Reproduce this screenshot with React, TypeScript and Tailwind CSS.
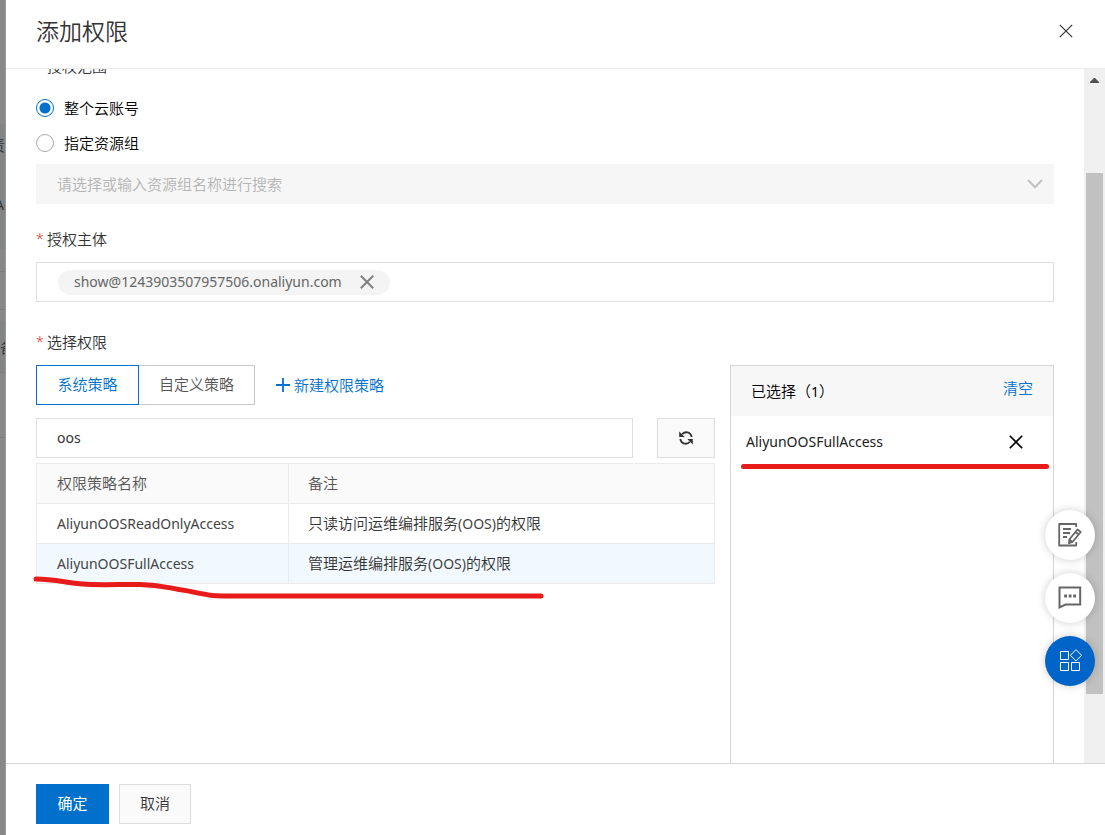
import React, { useState } from "react";

const policies = [
  { name: "AliyunOOSReadOnlyAccess", service: "只读访问运维编排服务" },
  { name: "AliyunOOSFullAccess", service: "管理运维编排服务" },
];

const radioClass =
  "appearance-none w-[18px] h-[18px] shrink-0 rounded-full border border-[#aaa] bg-white checked:border-[#0070cc] checked:bg-[radial-gradient(circle,#0070cc_5px,#fff_6px)]";

function CloseIcon({ size, width = 1 }: { size: number; width?: number }) {
  return (
    <svg width={size} height={size} viewBox="0 0 14 14" fill="none" stroke="currentColor" strokeWidth={width}>
      <path d="M.8 .8 13.2 13.2M13.2 .8 .8 13.2" />
    </svg>
  );
}

function RequiredLabel({ children, htmlFor }: { children: React.ReactNode; htmlFor: string }) {
  return (
    <label htmlFor={htmlFor} className="flex w-fit gap-1 text-[#333]">
      <span className="w-[7px] text-sm leading-5 text-[#d93026]">*</span>
      {children}
    </label>
  );
}

function Scrollbar() {
  return (
    <div className="flex w-[21px] shrink-0 flex-col items-center bg-[#f0f0f0]">
      <svg className="mt-[9px] shrink-0" width="9" height="5" viewBox="0 0 9 5" fill="#505050">
        <path d="M0 5V4L4 0H5L9 4V5Z" />
      </svg>
      <div className="mt-[90px] h-[75%] w-[17px] bg-[#c1c1c1]" />
    </div>
  );
}

function FloatingTools() {
  return (
    <div className="absolute right-[10px] top-[510px] flex flex-col gap-[13px] text-[#666]">
      <button type="button" aria-label="反馈" className="flex h-[50px] w-[50px] items-center justify-center rounded-full bg-white shadow-[0_0_8px_rgba(0,0,0,0.2)]">
        <svg width="24" height="24" viewBox="0 0 24 24" fill="none" stroke="currentColor" strokeWidth="1.8">
          <path d="M18.2 4V1H1.2V22.5H18.2V19" strokeLinejoin="round" />
          <path d="M5 6H13M5 10H12M5 14H9" />
          <path d="M19.5 6.5 22.7 9 14.5 19 11 20.2 11.3 16.5ZM17.5 9 20.7 11.5M11.3 16.5 14.5 19" strokeLinejoin="round" />
        </svg>
      </button>
      <button type="button" aria-label="咨询" className="flex h-[50px] w-[50px] items-center justify-center rounded-full bg-white shadow-[0_0_8px_rgba(0,0,0,0.2)]">
        <svg width="24" height="24" viewBox="0 0 24 24" fill="none" stroke="currentColor" strokeWidth="2">
          <path d="M1.5 1.5H22.2V18.5H7.5L1.5 21.5Z" />
          <path d="M6.2 10H9M10.7 10H13.5M15.2 10H18" strokeWidth="3" />
        </svg>
      </button>
      <button type="button" aria-label="应用" className="flex h-[50px] w-[50px] items-center justify-center rounded-full bg-[#0064c8] text-white shadow-[0_0_8px_rgba(0,0,0,0.2)]">
        <svg width="24" height="24" viewBox="0 0 24 24" fill="none" stroke="currentColor">
          <path d="M2.5 2.5H10.5V10.5H2.5ZM2.5 13.5H10.5V21.5H2.5ZM13.5 13.5H21.5V21.5H13.5Z" />
          <path d="M18 .7 23.6 6.3 18 11.9 12.4 6.3Z" />
        </svg>
      </button>
    </div>
  );
}

export default function App() {
  const [scope, setScope] = useState("account");
  const [keyword, setKeyword] = useState("oos");

  return (
    <div className="relative flex h-screen overflow-hidden bg-white font-['Noto_Sans','Noto_Sans_CJK_SC',sans-serif] font-[350] text-[15px] leading-5 text-[#333]">
      {/* strip of the dimmed page behind the drawer */}
      <div className="flex w-[6px] shrink-0 flex-col overflow-hidden border-r border-[#999] bg-[#888] text-[#333]">
        <div className="mt-[124px] flex h-[125px] shrink-0 flex-col bg-[#828486]">
          <span className="-ml-[10px] mt-[11px]">责</span>
          <span className="-ml-[5px] mt-10 text-sm font-normal">Ac</span>
        </div>
        <div className="mt-[22px] h-[39px] shrink-0 border-y border-[#7c7c7c]" />
        <div className="mt-[11px] h-[52px] shrink-0 border-b border-[#7c7c7c] bg-[#828486] pt-4">
          <span className="block w-[15px]">备</span>
        </div>
        <div className="h-[65px] shrink-0 border-b border-[#7c7c7c]" />
      </div>

      <div className="flex min-w-0 flex-1 flex-col">
        <header className="flex h-[69px] shrink-0 items-center justify-between border-b border-[#ebebeb] pb-1.5 pl-[30px] pr-8">
          <h1 className="font-[350] text-[23px] leading-8 text-[#333]">添加权限</h1>
          <button type="button" aria-label="关闭" className="text-[#333]">
            <CloseIcon size={14} width={1.2} />
          </button>
        </header>

        <main className="flex min-h-0 flex-1">
          <div className="flex min-w-0 flex-1 flex-col overflow-hidden px-[30px]">
            <fieldset className="-mt-[13px] shrink-0">
              <legend className="pl-[11px]">授权范围</legend>
              <div className="mt-[22px] flex flex-col gap-[15px] text-black">
                <label className="flex w-fit items-center gap-[10px]">
                  <input type="radio" name="scope" className={radioClass} checked={scope === "account"} onChange={() => setScope("account")} />
                  整个云账号
                </label>
                <label className="flex w-fit items-center gap-[10px]">
                  <input type="radio" name="scope" className={radioClass} checked={scope === "group"} onChange={() => setScope("group")} />
                  指定资源组
                </label>
              </div>
            </fieldset>

            <div className="relative mt-[11px] shrink-0">
              <select
                disabled={scope === "account"}
                aria-label="资源组"
                className="block h-10 w-full appearance-none bg-[#f6f6f6] pl-[21px] text-[#b4b4b4] opacity-100"
              >
                <option>请选择或输入资源组名称进行搜索</option>
              </select>
              <svg className="pointer-events-none absolute right-[11px] top-[15px]" width="16" height="10" viewBox="0 0 16 10" fill="none" stroke="#c1c1c1" strokeWidth="2">
                <path d="M1 1 8 8.2 15 1" />
              </svg>
            </div>

            <div className="mt-[25px] shrink-0">
              <RequiredLabel htmlFor="principal">授权主体</RequiredLabel>
              <div className="mt-[13px] flex h-10 items-center border border-[#dedede] pl-[21px]">
                <span className="flex h-[25px] items-center gap-[18px] rounded-full bg-[#f4f4f4] px-4 text-sm font-normal text-[#666]">
                  show@1243903507957506.onaliyun.com
                  <button type="button" aria-label="移除" className="text-[#808080]">
                    <CloseIcon size={14} width={2} />
                  </button>
                </span>
                <input id="principal" className="h-full min-w-0 flex-1 px-2 outline-none" />
              </div>
            </div>

            <div className="mt-[30px] shrink-0">
              <RequiredLabel htmlFor="policy">选择权限</RequiredLabel>
            </div>

            <div className="mt-[13px] flex min-h-[480px] shrink-0 gap-[15px]">
              <section className="min-w-0 flex-1">
                <div className="flex h-10 items-center">
                  <button type="button" className="z-10 h-10 w-[103px] border border-[#0070cc] pb-0.5 text-[#0070cc]">系统策略</button>
                  <button type="button" className="-ml-px h-10 w-[117px] border border-[#c8c8c8] pb-0.5 text-[#555]">自定义策略</button>
                  <a href="#new" className="ml-[21px] flex items-center gap-1 text-[#0070cc]">
                    <svg width="14" height="14" viewBox="0 0 14 14" fill="none" stroke="currentColor" strokeWidth="1.8">
                      <path d="M7 0V14M0 7H14" />
                    </svg>
                    新建权限策略
                  </a>
                </div>

                <div className="mt-[13px] flex gap-6">
                  <input
                    id="policy"
                    value={keyword}
                    onChange={(e) => setKeyword(e.target.value)}
                    className="h-10 min-w-0 flex-1 border border-[#dedede] px-5 pb-0.5 text-sm font-normal outline-none"
                  />
                  <button type="button" aria-label="刷新" className="flex h-10 w-[58px] items-center justify-center border border-[#dedede] bg-[#fafafa]">
                    <svg width="14" height="14" viewBox="0 0 14 14" fill="none" stroke="#333" strokeWidth="1.8">
                      <path d="M3.2 3.3C5.5 .3 11.5 .1 12.7 6M10.8 10.7C8.5 13.7 2.5 13.9 1.3 8" />
                      <path d="M.2 .5V6H5.7ZM13.8 13.5V8H8.3Z" fill="#333" stroke="none" />
                    </svg>
                  </button>
                </div>

                <div className="relative mt-[5px]">
                  <table className="w-full table-fixed border-collapse text-left">
                    <thead className="bg-[#fafafa] text-[#555]">
                      <tr className="h-10">
                        <th className="w-[252px] border border-[#ebebeb] px-5 pb-px font-[350]">权限策略名称</th>
                        <th className="border border-[#ebebeb] px-[19px] pb-px font-[350]">备注</th>
                      </tr>
                    </thead>
                    <tbody>
                      {policies.map((p) => (
                        <tr key={p.name} className="h-10 last:bg-[#f1f9ff]">
                          <td className="border border-[#ebebeb] px-5 text-sm font-normal text-[#444]">{p.name}</td>
                          <td className="border border-[#ebebeb] px-[19px] pb-px">
                            {p.service}
                            <span className="text-sm font-normal text-[#444]">(OOS)</span>
                            的权限
                          </td>
                        </tr>
                      ))}
                    </tbody>
                  </table>
                  <svg className="pointer-events-none absolute -left-1 top-[112px]" width="512" height="26" viewBox="0 0 512 26" fill="none" stroke="#e81b1b" strokeWidth="5" strokeLinecap="round">
                    <path d="M4 4C25 4 38 9 60 9.5C85 10 90 9 108 9.5C128 10 132 12 147 14.5C167 17 170 21 190 21H509" />
                  </svg>
                </div>
              </section>

              <aside className="w-[324px] shrink-0 border border-[#d6d6d6]">
                <div className="flex h-[50px] items-center justify-between bg-[#f7f7f7] px-5">
                  <span className="text-black">已选择（<span className="text-sm font-normal">1</span>）</span>
                  <button type="button" className="mb-1.5 text-[#0070cc]">清空</button>
                </div>
                <div className="flex h-12 items-center justify-between pl-[15px] pr-[30px] pt-1 text-black">
                  <span className="text-sm font-normal text-[#222]">AliyunOOSFullAccess</span>
                  <button type="button" aria-label="删除">
                    <CloseIcon size={14} width={1.6} />
                  </button>
                </div>
                <div className="ml-[10px] mr-1 h-[5px] rounded-full bg-[#e81b1b]" />
              </aside>
            </div>
          </div>
          <Scrollbar />
        </main>

        <footer className="flex h-[72px] shrink-0 gap-[10px] border-t border-[#d6d6d6] px-[30px] pt-5">
          <button type="button" className="h-10 w-[73px] border border-[#0070cc] bg-[#0070cc] pb-0.5 font-normal text-white">确定</button>
          <button type="button" className="h-10 w-[72px] border border-[#dedede] bg-[#fafafa] pb-0.5">取消</button>
        </footer>
      </div>

      <FloatingTools />
    </div>
  );
}
